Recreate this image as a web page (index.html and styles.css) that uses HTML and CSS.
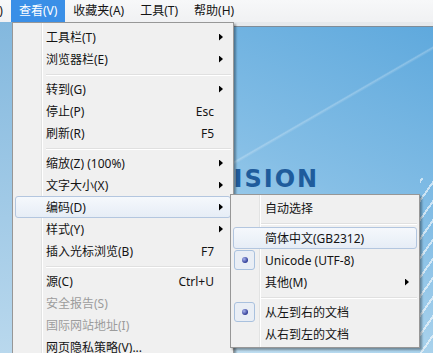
FILE: index.html
```html
<!DOCTYPE html>
<html lang="zh-CN">
<head>
  <meta charset="UTF-8" />
  <meta name="viewport" content="width=device-width, initial-scale=1.0" />
  <title>查看菜单</title>
  <link rel="stylesheet" href="styles.css">
</head>
<body>

  <div class="menubar">
    <span class="mb-item first">编辑(E)</span>
    <span class="mb-item active">查看(V)</span>
    <span class="mb-item">收藏夹(A)</span>
    <span class="mb-item">工具(T)</span>
    <span class="mb-item">帮助(H)</span>
  </div>

  <div class="page">
    <div class="side"></div>
    <div class="view">
      <div class="view-top"></div>
      <div class="view-body">
        <div class="brand">VISION</div>
      </div>
    </div>
  </div>

  <!-- View menu -->
  <div class="menu main-menu">
    <div class="mi"><span class="label">工具栏(T)</span><span class="arrow"></span></div>
    <div class="mi"><span class="label">浏览器栏(E)</span><span class="arrow"></span></div>
    <div class="sep"></div>
    <div class="mi"><span class="label">转到(G)</span><span class="arrow"></span></div>
    <div class="mi"><span class="label">停止(P)</span><span class="key">Esc</span></div>
    <div class="mi"><span class="label">刷新(R)</span><span class="key">F5</span></div>
    <div class="sep"></div>
    <div class="mi"><span class="label">缩放(Z) (100%)</span><span class="arrow"></span></div>
    <div class="mi"><span class="label">文字大小(X)</span><span class="arrow"></span></div>
    <div class="mi hot"><span class="label">编码(D)</span><span class="arrow"></span></div>
    <div class="mi"><span class="label">样式(Y)</span><span class="arrow"></span></div>
    <div class="mi"><span class="label">插入光标浏览(B)</span><span class="key">F7</span></div>
    <div class="sep"></div>
    <div class="mi"><span class="label">源(C)</span><span class="key">Ctrl+U</span></div>
    <div class="mi disabled"><span class="label">安全报告(S)</span></div>
    <div class="mi disabled"><span class="label">国际网站地址(I)</span></div>
    <div class="mi"><span class="label">网页隐私策略(V)...</span></div>
  </div>

  <!-- Encoding submenu -->
  <div class="menu sub-menu">
    <div class="mi"><span class="label">自动选择</span></div>
    <div class="sep"></div>
    <div class="mi hot"><span class="label">简体中文(GB2312)</span></div>
    <div class="mi"><span class="check"><span class="dot"></span></span><span class="label">Unicode (UTF-8)</span></div>
    <div class="mi"><span class="label">其他(M)</span><span class="arrow"></span></div>
    <div class="sep"></div>
    <div class="mi"><span class="check"><span class="dot"></span></span><span class="label">从左到右的文档</span></div>
    <div class="mi"><span class="label">从右到左的文档</span></div>
  </div>

</body>
</html>
```

FILE: styles.css
```css
* {
  box-sizing: border-box;
}

html, body {
  margin: 0;
  padding: 0;
  height: 100%;
  overflow: hidden;
}

body {
  font-family: "Noto Sans", "Noto Sans CJK SC", sans-serif;
  font-size: 12px;
  color: #141414;
  background: #f4f5f7;
}

/* menu bar */

.menubar {
  display: flex;
  height: 22px;
  background: linear-gradient(#f7f8f9, #f0f1f3);
  white-space: nowrap;
}

.mb-item {
  padding: 0 8px;
  line-height: 22px;
}

.mb-item.first {
  margin-left: -43px;
}

.mb-item.active {
  background: #3a8fe7;
  color: #fff;
}

/* page behind the menus */

.page {
  display: flex;
  height: calc(100% - 22px);
}

.side {
  width: 12px;
  background: linear-gradient(#83b8de, #b9d8ed);
}

.view {
  flex: 1;
  display: flex;
  flex-direction: column;
}

.view-top {
  height: 5px;
  background: #e6e9ec;
  border-bottom: 1px solid #7f8c98;
}

.view-body {
  flex: 1;
  padding: 140px 0 0 201px;
  background:
    repeating-linear-gradient(-55deg, transparent 0 9px, rgba(255, 255, 255, 0.6) 9px 11px) right bottom / 13px 175px no-repeat,
    linear-gradient(150deg, transparent 46%, rgba(255, 255, 255, 0.25) 46.3%, transparent 46.8%),
    linear-gradient(205deg, #5fa9dd 0%, #86bfe6 40%, #b4d8ee 70%, #d6eaf6 100%);
}

.brand {
  font-family: "DejaVu Sans", sans-serif;
  font-weight: bold;
  font-size: 24px;
  line-height: 24px;
  letter-spacing: 2px;
  color: #1f5c9c;
}

/* drop-down menus */

.menu {
  position: absolute;
  background: #f0f0f0;
  border: 1px solid #979797;
  padding: 3px 2px 2px;
  box-shadow: 2px 2px 2px rgba(0, 0, 0, 0.35);
}

.menu::before {
  content: "";
  position: absolute;
  top: 0;
  bottom: 0;
  left: 28px;
  width: 1px;
  background: #e2e3e3;
  box-shadow: 1px 0 0 #fff;
}

.main-menu {
  left: 12px;
  top: 22px;
  width: 222px;
  height: 345px;
}

.sub-menu {
  left: 230px;
  top: 194px;
  width: 190px;
  padding-top: 2px;
}

.mi {
  position: relative;
  display: flex;
  align-items: center;
  height: 22px;
  padding-left: 31px;
  white-space: nowrap;
  border: 1px solid transparent;
  border-radius: 3px;
}

.mi .label {
  flex: 1;
  margin-left: -1px;
}

.sub-menu .mi {
  padding-left: 32px;
}

.mi.hot {
  background: linear-gradient(#f5f8fc, #e6edf6);
  border-color: #b3c6df;
}

.mi.disabled {
  color: #9c9c9c;
}

.key {
  margin-right: 16px;
}

.arrow {
  width: 4px;
  height: 7px;
  margin-right: 7px;
  background: #000;
  clip-path: polygon(0 0, 100% 50%, 0 100%);
}

.sep {
  height: 8px;
  display: flex;
  align-items: center;
  padding-left: 31px;
}

.sep::after {
  content: "";
  flex: 1;
  height: 1px;
  background: #e0e0e0;
  box-shadow: 0 1px 0 #fff;
}

.sub-menu .sep {
  padding-left: 27px;
}

.check {
  position: absolute;
  left: 0;
  top: 0;
  width: 21px;
  height: 20px;
  border: 1px solid #a9c1de;
  border-radius: 3px;
  background: #e9eef5;
  display: flex;
  align-items: center;
  justify-content: center;
}

.dot {
  width: 6px;
  height: 6px;
  border-radius: 50%;
  background: radial-gradient(circle at 35% 35%, #a9b4ee, #2f3c95 70%);
}
```
